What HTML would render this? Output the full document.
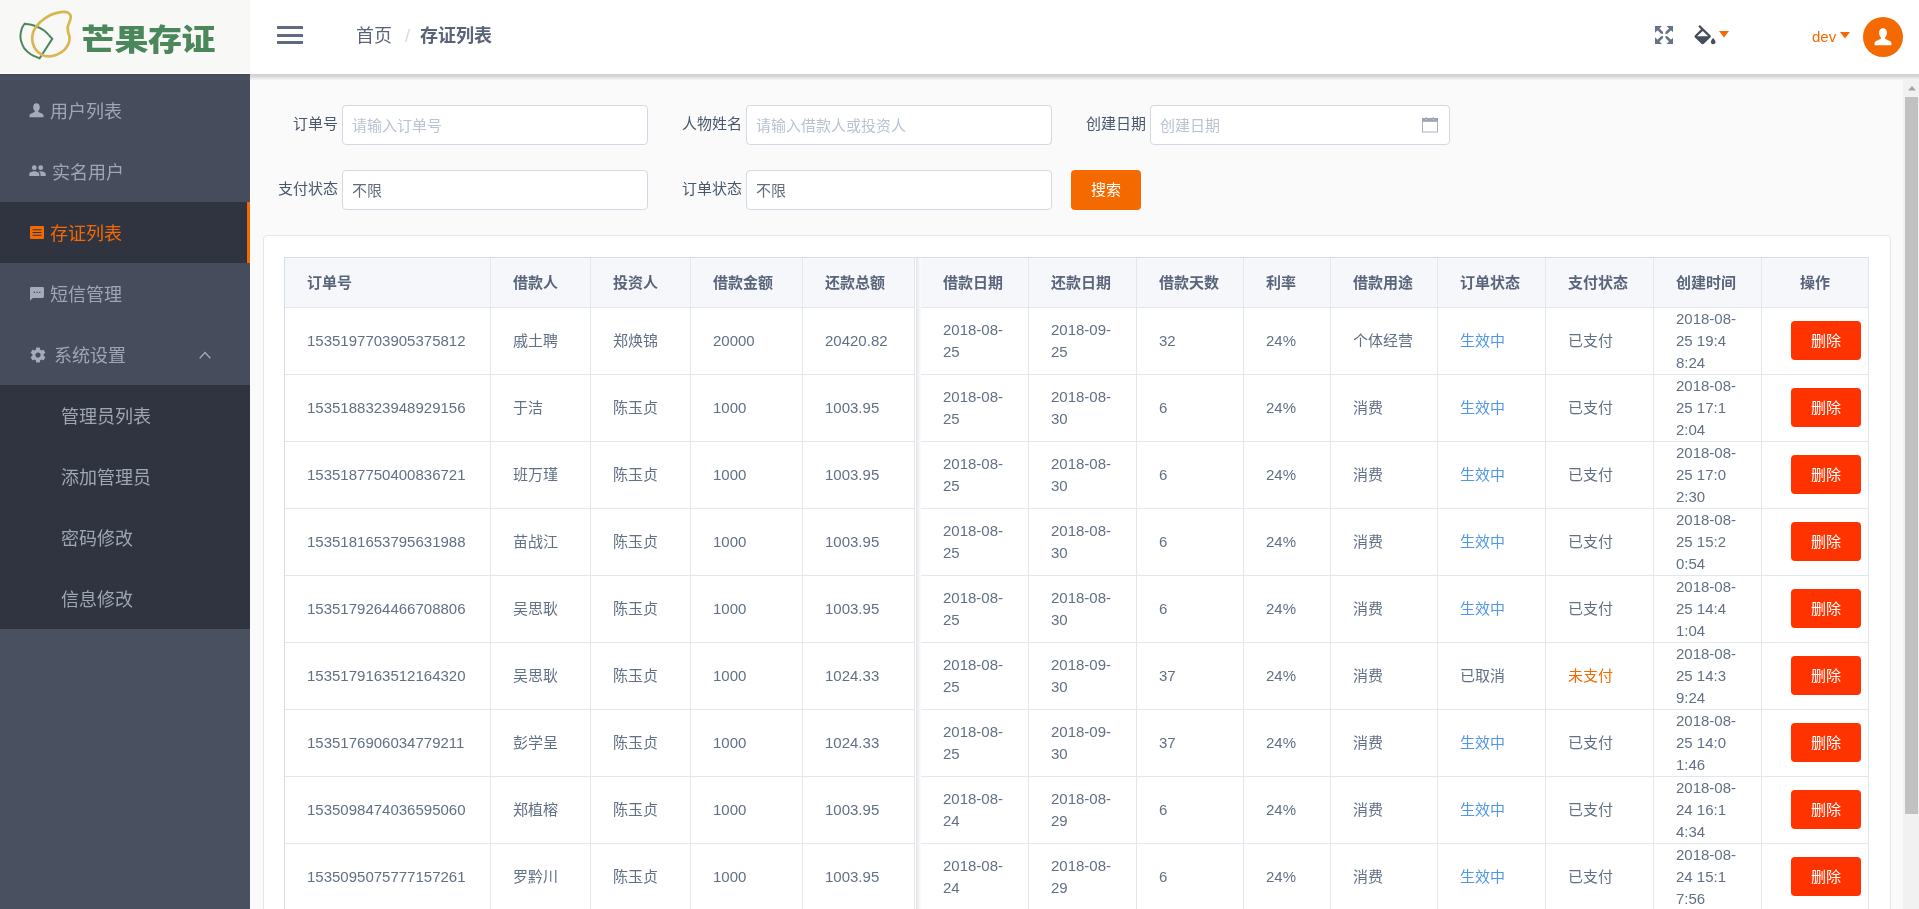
<!DOCTYPE html>
<html lang="zh-CN">
<head>
<meta charset="utf-8">
<title>芒果存证</title>
<style>
*{box-sizing:border-box;margin:0;padding:0}
html,body{width:1919px;height:909px;overflow:hidden;background:#fafafa;font-family:"Liberation Sans","Noto Sans CJK SC",sans-serif;}
body{position:relative}
#wrap{position:absolute;left:0;top:0;width:1919px;height:909px;will-change:transform}
.abs{position:absolute}
#side{position:absolute;left:0;top:0;width:250px;height:909px;background:#495060}
#menubg{position:absolute;left:0;top:80px;width:250px;height:549px;background:#464c5b}
#logo{position:absolute;left:0;top:0;width:250px;height:74px;background:#f8f8f6;border-bottom:1px solid #fff}
#logo .txt{position:absolute;left:81px;top:14px;font-size:34px;line-height:48px;font-weight:900;color:#4a875a;letter-spacing:-0.5px;white-space:nowrap;transform:scaleY(0.88);transform-origin:0 39.5px}
.mi{position:absolute;left:0;width:250px;height:61px;color:#9ea6b4;font-size:18px;line-height:61px;white-space:nowrap}
.mi .lb{position:absolute;top:2px}
.mi svg{position:absolute}
.mi.act{background:#303441;color:#f56a00;border-right:3px solid #f56a00}
#sub{position:absolute;left:0;top:385px;width:250px;height:244px;background:#303441}
#head{position:absolute;left:250px;top:0;width:1669px;height:74px;background:#fff}
#hshadow{position:absolute;left:250px;top:74px;width:1669px;height:6px;background:linear-gradient(to bottom,#d0d0d0 0,#d0d0d0 1px,#d5d5d5 1px,#d5d5d5 2px,#d8d8d8 2px,#d8d8d8 3px,#e2e2e2 3px,#e2e2e2 4px,#eaeaea 4px,#eaeaea 5px,#f1f1f1 5px,#f1f1f1 6px)}
.bc{position:absolute;top:22px;font-size:18px;line-height:28px;color:#5a6478;white-space:nowrap}
.lab{position:absolute;font-size:15px;line-height:20px;color:#48576a;white-space:nowrap;text-align:right}
.inp{position:absolute;width:306px;height:40px;border:1px solid #d1d9e4;border-radius:4px;background:#fff;font-size:15px;line-height:40px;padding-left:9px;color:#b9c3d3;white-space:nowrap}
.inp.v{color:#626c7b}
.btn{position:absolute;width:70px;height:40px;border-radius:4px;color:#fff;font-size:15px;line-height:40px;text-align:center}
#card{position:absolute;left:263px;top:235px;width:1628px;height:700px;background:#fff;border:1px solid #e1e7ef;border-radius:4px}
#tbl{position:absolute;left:284px;top:257px;width:1585px;height:660px;border-left:1px solid #d6dde7;border-top:1px solid #d6dde7;overflow:hidden}
.tr{position:absolute;left:0;width:1584px;border-bottom:1px solid #e1e7ee;background:#fff}
.tr.th{background:#f5f7fa}
.c{position:absolute;top:0;height:100%;border-right:1px solid #e1e7ee;padding:0 22px 0 22px;display:flex;align-items:center;font-size:15px;line-height:22px;color:#627085}
.c .t{width:100%;white-space:nowrap}
.th .c{font-weight:bold;color:#5a657b}
.c.op{padding:0}
.th .c.op .t{text-align:center}
.lk{color:#5298e6}
.wn{color:#f56a00}
.del{display:block;margin-top:-1px;margin-left:29px;width:70px;height:39px;border-radius:4px;background:#ff3300;color:#fff;font-size:15px;line-height:39px;text-align:center}
#gap{position:absolute;left:630px;top:0;width:6px;height:100%;background:linear-gradient(to right,#fff 0,#fff 1px,#e5e5e5 1px,#ececec 2.5px,#f7f7f7 4.5px,#fcfcfc 6px)}
#sb{position:absolute;left:1903px;top:80px;width:16px;height:829px;background:#f1f1f1}
#sb .thumb{position:absolute;left:2px;top:17px;width:13px;height:717px;background:#c1c1c1}
</style>
</head>
<body>
<div id="wrap">
<div id="side">
  <div id="logo">
    <svg class="abs" style="left:0;top:0" width="80" height="74" viewBox="0 0 80 74" fill="none">
      <path d="M24.62 23.79 C26.27 24.10 31.27 24.58 34.51 25.70 C37.76 26.81 41.11 28.29 44.07 30.47 C47.02 32.66 50.89 37.41 52.25 38.80 L39.63 58.24 C38.21 57.61 33.66 56.14 31.10 54.49 C28.54 52.84 25.96 50.62 24.28 48.35 C22.60 46.07 21.63 43.12 21.01 40.84 C20.38 38.57 20.35 36.86 20.53 34.70 C20.71 32.54 21.42 29.70 22.10 27.88 C22.78 26.06 24.20 24.47 24.62 23.79Z" stroke="#4a875a" stroke-width="2" stroke-linejoin="miter"/>
      <path d="M50.55 14.92 C52.55 14.03 54.95 13.38 57.17 12.87 C59.38 12.36 62.03 11.89 63.85 11.85 C65.67 11.80 67.02 12.08 68.08 12.60 C69.14 13.11 69.77 14.02 70.20 14.92 C70.63 15.81 70.80 16.79 70.68 17.99 C70.55 19.18 69.95 20.54 69.45 22.08 C68.95 23.62 67.87 25.43 67.67 27.20 C67.48 28.96 67.98 30.95 68.29 32.66 C68.59 34.36 69.46 35.61 69.52 37.43 C69.57 39.25 69.55 41.43 68.63 43.57 C67.71 45.71 66.09 48.35 63.99 50.26 C61.89 52.17 58.53 54.01 56.01 55.03 C53.48 56.06 51.26 56.47 48.84 56.40 C46.42 56.33 43.69 55.83 41.47 54.62 C39.26 53.42 37.02 51.21 35.54 49.17 C34.06 47.12 33.14 44.53 32.60 42.34 C32.07 40.16 32.04 38.23 32.33 36.07 C32.63 33.91 33.10 31.68 34.38 29.38 C35.65 27.08 38.18 24.15 39.97 22.28 C41.77 20.42 43.40 19.42 45.16 18.19 C46.92 16.96 48.55 15.80 50.55 14.92Z" stroke="#d9b750" stroke-width="2.700"/>
    </svg>
    <div class="txt">芒果存证</div>
  </div>
  <div class="abs" style="left:0;top:74px;width:250px;height:1px;background:#40465a"></div>
  <div id="menubg"></div>
  <div class="mi" style="top:80px">
    <svg style="left:29px;top:23px" width="15" height="15" viewBox="0 0 15 15"><path fill="#a3abb8" d="M7.5 0.3c2 0 3.3 1.5 3.3 3.7 0 1.6-.6 2.9-1.4 3.7-.4.4-.4 1.1.2 1.4l3.6 1.7c.9.4 1.3 1 1.3 1.9v1.6H.5v-1.6c0-.9.4-1.5 1.3-1.9l3.6-1.7c.6-.3.6-1 .2-1.4C4.800 6.900 4.200 5.600 4.200 4c0-2.200 1.300-3.700 3.300-3.700z"/></svg>
    <span class="lb" style="left:50px">用户列表</span>
  </div>
  <div class="mi" style="top:141px">
    <svg style="left:29px;top:24px" width="17" height="12" viewBox="0 0 17 12"><path fill="#a3abb8" d="M5.300 0.300a2.400 2.400 0 1 1 0 4.800 2.400 2.400 0 0 1 0-4.800zm6.400 0a2.400 2.400 0 1 1 0 4.800 2.400 2.400 0 0 1 0-4.800zM5.300 6.300c1.900 0 5 .9 5 2.800V11H.3V9.100c0-1.900 3.100-2.800 5-2.800zm6.400 0c2 0 5 .9 5 2.800V11h-5.200V9.100c0-1.100-.6-2-1.500-2.600.6-.1 1.200-.2 1.700-.2z"/></svg>
    <span class="lb" style="left:52px">实名用户</span>
  </div>
  <div class="mi act" style="top:202px">
    <svg style="left:30px;top:24px" width="14" height="13" viewBox="0 0 14 13"><path fill="#f56a00" d="M1 0h12a1 1 0 0 1 1 1v11a1 1 0 0 1-1 1H1a1 1 0 0 1-1-1V1a1 1 0 0 1 1-1zm1.500 3.200v1h9v-1zm0 2.800v1h9V6zm0 2.800v1h9v-1z"/></svg>
    <span class="lb" style="left:50px">存证列表</span>
  </div>
  <div class="mi" style="top:263px">
    <svg style="left:30px;top:24px" width="14" height="14" viewBox="0 0 14 14"><path fill="#a3abb8" d="M1.400 0h11.200c.8 0 1.400.6 1.400 1.400v8.100c0 .8-.6 1.400-1.400 1.400H2.800L0 13.700V1.400C0 .6.600 0 1.400 0zm2.300 4.800v1.300H5V4.800zm2.700 0v1.300h1.300V4.800zm2.700 0v1.300h1.300V4.800z"/></svg>
    <span class="lb" style="left:50px">短信管理</span>
  </div>
  <div class="mi" style="top:324px">
    <svg style="left:28.500px;top:22px" width="18" height="18" viewBox="0 0 24 24"><path fill="#a3abb8" d="M19.430 12.980c.040-.320.070-.640.070-.980s-.030-.660-.070-.980l2.110-1.650c.190-.150.240-.420.120-.640l-2-3.460c-.120-.220-.390-.300-.610-.220l-2.490 1c-.520-.400-1.080-.730-1.690-.980l-.380-2.650A.488.488 0 0 0 14 2h-4c-.250 0-.460.180-.490.420l-.380 2.650c-.610.250-1.170.590-1.690.980l-2.490-1c-.230-.090-.490 0-.610.220l-2 3.460c-.130.220-.070.490.120.640l2.110 1.650c-.040.320-.070.650-.070.980s.030.660.070.980l-2.110 1.650c-.190.150-.240.420-.120.640l2 3.460c.120.220.390.300.610.220l2.490-1c.520.400 1.080.730 1.690.980l.380 2.650c.030.240.240.420.490.420h4c.250 0 .460-.180.490-.420l.380-2.650c.610-.250 1.170-.590 1.690-.980l2.490 1c.230.090.490 0 .610-.220l2-3.460c.120-.220.070-.490-.120-.640l-2.110-1.650zM12 15.500c-1.930 0-3.500-1.570-3.500-3.500s1.570-3.500 3.500-3.500 3.500 1.570 3.500 3.500-1.570 3.500-3.500 3.500z"/></svg>
    <span class="lb" style="left:54px">系统设置</span>
    <svg style="left:199px;top:27px" width="12" height="8" viewBox="0 0 12 8"><path d="M0.700 7.200 6 1.500l5.300 5.700" stroke="#a3abb8" stroke-width="1.300" fill="none"/></svg>
  </div>
  <div id="sub">
    <div class="mi" style="top:0"><span class="lb" style="left:61px">管理员列表</span></div>
    <div class="mi" style="top:61px"><span class="lb" style="left:61px">添加管理员</span></div>
    <div class="mi" style="top:122px"><span class="lb" style="left:61px">密码修改</span></div>
    <div class="mi" style="top:183px"><span class="lb" style="left:61px">信息修改</span></div>
  </div>
</div>

<div id="head">
  <div class="abs" style="left:27px;top:26px;width:26px;height:3px;background:#5f6b80"></div>
  <div class="abs" style="left:27px;top:33.500px;width:26px;height:3px;background:#5f6b80"></div>
  <div class="abs" style="left:27px;top:41px;width:26px;height:3px;background:#5f6b80"></div>
  <div class="bc" style="left:106px">首页</div>
  <div class="bc" style="left:155px;color:#d3dce6">/</div>
  <div class="bc" style="left:170px;font-weight:bold">存证列表</div>

  <!-- fullscreen icon -->
  <svg class="abs" style="left:1404.600px;top:26px" width="18.500" height="18" viewBox="0 0 19 19" preserveAspectRatio="none"><g fill="#667387" stroke="#667387"><path stroke="none" d="M0 0h7.200L0 7.200z"/><path stroke="none" d="M19 0v7.200L11.800 0z"/><path stroke="none" d="M0 19v-7.200L7.200 19z"/><path stroke="none" d="M19 19h-7.200L19 11.800z"/><path fill="none" stroke-width="2.900" d="M2.500 2.500L16.500 16.500M16.500 2.500L2.500 16.500"/><rect stroke="none" fill="#fff" x="8.300" y="0" width="2.400" height="19"/><rect stroke="none" fill="#fff" x="0" y="8.300" width="19" height="2.400"/></g></svg>
  <!-- paint bucket -->
  <svg class="abs" style="left:1441.200px;top:25.100px" width="28" height="27.200" viewBox="0 0 24 24" preserveAspectRatio="none"><path fill="#464c5b" d="M16.560 8.940 7.620 0 6.210 1.410l2.380 2.380-5.150 5.150a1.490 1.490 0 0 0 0 2.120l5.500 5.500c.290.290.680.440 1.060.440s.770-.150 1.060-.440l5.500-5.500c.590-.580.590-1.530 0-2.120zM5.210 10 10 5.210 14.790 10H5.210zM19 11.500s-2 2.170-2 3.500c0 1.100.9 2 2 2s2-.900 2-2c0-1.330-2-3.500-2-3.500z"/></svg>
  <svg class="abs" style="left:1469px;top:31px" width="10" height="7" viewBox="0 0 10 7"><path fill="#f56a00" d="M0 0h10L5 6.500z"/></svg>
  <div class="abs" style="left:1562px;top:25px;font-size:15px;line-height:24px;color:#f56a00">dev</div>
  <svg class="abs" style="left:1590px;top:32px" width="10" height="7" viewBox="0 0 10 7"><path fill="#f56a00" d="M0 0h10L5 6.500z"/></svg>
  <div class="abs" style="left:1613px;top:17px;width:40px;height:40px;border-radius:50%;background:#f56a00"></div>
  <svg class="abs" style="left:1624px;top:28px" width="18" height="18" viewBox="0 0 15 15"><path fill="#fff" d="M7.500 0.300c2 0 3.300 1.500 3.300 3.700 0 1.600-.6 2.900-1.400 3.700-.4.400-.4 1.100.2 1.400l3.600 1.700c.9.400 1.300 1 1.300 1.900v1.600H.5v-1.600c0-.9.4-1.500 1.300-1.900l3.600-1.700c.6-.3.6-1 .2-1.400C4.800 6.900 4.200 5.600 4.200 4c0-2.200 1.300-3.700 3.300-3.700z"/></svg>
</div>
<div id="hshadow"></div>

<!-- search form -->
<div class="lab" style="left:250px;width:88px;top:114px">订单号</div>
<div class="inp" style="left:342px;top:105px">请输入订单号</div>
<div class="lab" style="left:650px;width:92px;top:114px">人物姓名</div>
<div class="inp" style="left:746px;top:105px">请输入借款人或投资人</div>
<div class="lab" style="left:1050px;width:96px;top:114px">创建日期</div>
<div class="inp" style="left:1150px;top:105px;width:300px">创建日期
  <svg class="abs" style="left:271px;top:11px" width="16" height="16" viewBox="0 0 16 16"><rect x="0.500" y="1.500" width="15" height="13.500" fill="none" stroke="#aab2c0" stroke-width="1"/><rect x="0" y="1" width="16" height="3.800" fill="#9ca5b5"/><rect x="3.700" y="0" width="1" height="2" fill="#9ca5b5"/><rect x="10.800" y="0" width="1" height="2" fill="#9ca5b5"/><circle cx="4.200" cy="2.600" r="0.600" fill="#d5dae2"/><circle cx="11.300" cy="2.600" r="0.600" fill="#d5dae2"/></svg>
</div>
<div class="lab" style="left:250px;width:88px;top:179px">支付状态</div>
<div class="inp v" style="left:342px;top:170px">不限</div>
<div class="lab" style="left:650px;width:92px;top:179px">订单状态</div>
<div class="inp v" style="left:746px;top:170px">不限</div>
<div class="btn" style="left:1071px;top:170px;background:#f56a00">搜索</div>

<div id="card"></div>
<div id="tbl">
<div class="tr th" style="top:0px;height:50px"><div class="c" style="left:0px;width:206px"><div class="t">订单号</div></div><div class="c" style="left:206px;width:100px"><div class="t">借款人</div></div><div class="c" style="left:306px;width:100px"><div class="t">投资人</div></div><div class="c" style="left:406px;width:112px"><div class="t">借款金额</div></div><div class="c lastfix" style="left:518px;width:112px"><div class="t">还款总额</div></div><div class="c" style="left:636px;width:108px"><div class="t">借款日期</div></div><div class="c" style="left:744px;width:108px"><div class="t">还款日期</div></div><div class="c" style="left:852px;width:107px"><div class="t">借款天数</div></div><div class="c" style="left:959px;width:87px"><div class="t">利率</div></div><div class="c" style="left:1046px;width:107px"><div class="t">借款用途</div></div><div class="c" style="left:1153px;width:108px"><div class="t">订单状态</div></div><div class="c" style="left:1261px;width:108px"><div class="t">支付状态</div></div><div class="c" style="left:1369px;width:108px"><div class="t">创建时间</div></div><div class="c op" style="left:1477px;width:107px"><div class="t">操作</div></div></div>
<div class="tr" style="top:50px;height:67px"><div class="c" style="left:0px;width:206px"><div class="t">1535197703905375812</div></div><div class="c" style="left:206px;width:100px"><div class="t">戚土聘</div></div><div class="c" style="left:306px;width:100px"><div class="t">郑焕锦</div></div><div class="c" style="left:406px;width:112px"><div class="t">20000</div></div><div class="c lastfix" style="left:518px;width:112px"><div class="t">20420.82</div></div><div class="c" style="left:636px;width:108px"><div class="t">2018-08-<br>25</div></div><div class="c" style="left:744px;width:108px"><div class="t">2018-09-<br>25</div></div><div class="c" style="left:852px;width:107px"><div class="t">32</div></div><div class="c" style="left:959px;width:87px"><div class="t">24%</div></div><div class="c" style="left:1046px;width:107px"><div class="t">个体经营</div></div><div class="c" style="left:1153px;width:108px"><div class="t"><span class="lk">生效中</span></div></div><div class="c" style="left:1261px;width:108px"><div class="t">已支付</div></div><div class="c" style="left:1369px;width:108px"><div class="t">2018-08-<br>25 19:4<br>8:24</div></div><div class="c op" style="left:1477px;width:107px"><div class="t"><span class="del">删除</span></div></div></div>
<div class="tr" style="top:117px;height:67px"><div class="c" style="left:0px;width:206px"><div class="t">1535188323948929156</div></div><div class="c" style="left:206px;width:100px"><div class="t">于洁</div></div><div class="c" style="left:306px;width:100px"><div class="t">陈玉贞</div></div><div class="c" style="left:406px;width:112px"><div class="t">1000</div></div><div class="c lastfix" style="left:518px;width:112px"><div class="t">1003.95</div></div><div class="c" style="left:636px;width:108px"><div class="t">2018-08-<br>25</div></div><div class="c" style="left:744px;width:108px"><div class="t">2018-08-<br>30</div></div><div class="c" style="left:852px;width:107px"><div class="t">6</div></div><div class="c" style="left:959px;width:87px"><div class="t">24%</div></div><div class="c" style="left:1046px;width:107px"><div class="t">消费</div></div><div class="c" style="left:1153px;width:108px"><div class="t"><span class="lk">生效中</span></div></div><div class="c" style="left:1261px;width:108px"><div class="t">已支付</div></div><div class="c" style="left:1369px;width:108px"><div class="t">2018-08-<br>25 17:1<br>2:04</div></div><div class="c op" style="left:1477px;width:107px"><div class="t"><span class="del">删除</span></div></div></div>
<div class="tr" style="top:184px;height:67px"><div class="c" style="left:0px;width:206px"><div class="t">1535187750400836721</div></div><div class="c" style="left:206px;width:100px"><div class="t">班万瑾</div></div><div class="c" style="left:306px;width:100px"><div class="t">陈玉贞</div></div><div class="c" style="left:406px;width:112px"><div class="t">1000</div></div><div class="c lastfix" style="left:518px;width:112px"><div class="t">1003.95</div></div><div class="c" style="left:636px;width:108px"><div class="t">2018-08-<br>25</div></div><div class="c" style="left:744px;width:108px"><div class="t">2018-08-<br>30</div></div><div class="c" style="left:852px;width:107px"><div class="t">6</div></div><div class="c" style="left:959px;width:87px"><div class="t">24%</div></div><div class="c" style="left:1046px;width:107px"><div class="t">消费</div></div><div class="c" style="left:1153px;width:108px"><div class="t"><span class="lk">生效中</span></div></div><div class="c" style="left:1261px;width:108px"><div class="t">已支付</div></div><div class="c" style="left:1369px;width:108px"><div class="t">2018-08-<br>25 17:0<br>2:30</div></div><div class="c op" style="left:1477px;width:107px"><div class="t"><span class="del">删除</span></div></div></div>
<div class="tr" style="top:251px;height:67px"><div class="c" style="left:0px;width:206px"><div class="t">1535181653795631988</div></div><div class="c" style="left:206px;width:100px"><div class="t">苗战江</div></div><div class="c" style="left:306px;width:100px"><div class="t">陈玉贞</div></div><div class="c" style="left:406px;width:112px"><div class="t">1000</div></div><div class="c lastfix" style="left:518px;width:112px"><div class="t">1003.95</div></div><div class="c" style="left:636px;width:108px"><div class="t">2018-08-<br>25</div></div><div class="c" style="left:744px;width:108px"><div class="t">2018-08-<br>30</div></div><div class="c" style="left:852px;width:107px"><div class="t">6</div></div><div class="c" style="left:959px;width:87px"><div class="t">24%</div></div><div class="c" style="left:1046px;width:107px"><div class="t">消费</div></div><div class="c" style="left:1153px;width:108px"><div class="t"><span class="lk">生效中</span></div></div><div class="c" style="left:1261px;width:108px"><div class="t">已支付</div></div><div class="c" style="left:1369px;width:108px"><div class="t">2018-08-<br>25 15:2<br>0:54</div></div><div class="c op" style="left:1477px;width:107px"><div class="t"><span class="del">删除</span></div></div></div>
<div class="tr" style="top:318px;height:67px"><div class="c" style="left:0px;width:206px"><div class="t">1535179264466708806</div></div><div class="c" style="left:206px;width:100px"><div class="t">吴思耿</div></div><div class="c" style="left:306px;width:100px"><div class="t">陈玉贞</div></div><div class="c" style="left:406px;width:112px"><div class="t">1000</div></div><div class="c lastfix" style="left:518px;width:112px"><div class="t">1003.95</div></div><div class="c" style="left:636px;width:108px"><div class="t">2018-08-<br>25</div></div><div class="c" style="left:744px;width:108px"><div class="t">2018-08-<br>30</div></div><div class="c" style="left:852px;width:107px"><div class="t">6</div></div><div class="c" style="left:959px;width:87px"><div class="t">24%</div></div><div class="c" style="left:1046px;width:107px"><div class="t">消费</div></div><div class="c" style="left:1153px;width:108px"><div class="t"><span class="lk">生效中</span></div></div><div class="c" style="left:1261px;width:108px"><div class="t">已支付</div></div><div class="c" style="left:1369px;width:108px"><div class="t">2018-08-<br>25 14:4<br>1:04</div></div><div class="c op" style="left:1477px;width:107px"><div class="t"><span class="del">删除</span></div></div></div>
<div class="tr" style="top:385px;height:67px"><div class="c" style="left:0px;width:206px"><div class="t">1535179163512164320</div></div><div class="c" style="left:206px;width:100px"><div class="t">吴思耿</div></div><div class="c" style="left:306px;width:100px"><div class="t">陈玉贞</div></div><div class="c" style="left:406px;width:112px"><div class="t">1000</div></div><div class="c lastfix" style="left:518px;width:112px"><div class="t">1024.33</div></div><div class="c" style="left:636px;width:108px"><div class="t">2018-08-<br>25</div></div><div class="c" style="left:744px;width:108px"><div class="t">2018-09-<br>30</div></div><div class="c" style="left:852px;width:107px"><div class="t">37</div></div><div class="c" style="left:959px;width:87px"><div class="t">24%</div></div><div class="c" style="left:1046px;width:107px"><div class="t">消费</div></div><div class="c" style="left:1153px;width:108px"><div class="t">已取消</div></div><div class="c" style="left:1261px;width:108px"><div class="t"><span class="wn">未支付</span></div></div><div class="c" style="left:1369px;width:108px"><div class="t">2018-08-<br>25 14:3<br>9:24</div></div><div class="c op" style="left:1477px;width:107px"><div class="t"><span class="del">删除</span></div></div></div>
<div class="tr" style="top:452px;height:67px"><div class="c" style="left:0px;width:206px"><div class="t">1535176906034779211</div></div><div class="c" style="left:206px;width:100px"><div class="t">彭学呈</div></div><div class="c" style="left:306px;width:100px"><div class="t">陈玉贞</div></div><div class="c" style="left:406px;width:112px"><div class="t">1000</div></div><div class="c lastfix" style="left:518px;width:112px"><div class="t">1024.33</div></div><div class="c" style="left:636px;width:108px"><div class="t">2018-08-<br>25</div></div><div class="c" style="left:744px;width:108px"><div class="t">2018-09-<br>30</div></div><div class="c" style="left:852px;width:107px"><div class="t">37</div></div><div class="c" style="left:959px;width:87px"><div class="t">24%</div></div><div class="c" style="left:1046px;width:107px"><div class="t">消费</div></div><div class="c" style="left:1153px;width:108px"><div class="t"><span class="lk">生效中</span></div></div><div class="c" style="left:1261px;width:108px"><div class="t">已支付</div></div><div class="c" style="left:1369px;width:108px"><div class="t">2018-08-<br>25 14:0<br>1:46</div></div><div class="c op" style="left:1477px;width:107px"><div class="t"><span class="del">删除</span></div></div></div>
<div class="tr" style="top:519px;height:67px"><div class="c" style="left:0px;width:206px"><div class="t">1535098474036595060</div></div><div class="c" style="left:206px;width:100px"><div class="t">郑植榕</div></div><div class="c" style="left:306px;width:100px"><div class="t">陈玉贞</div></div><div class="c" style="left:406px;width:112px"><div class="t">1000</div></div><div class="c lastfix" style="left:518px;width:112px"><div class="t">1003.95</div></div><div class="c" style="left:636px;width:108px"><div class="t">2018-08-<br>24</div></div><div class="c" style="left:744px;width:108px"><div class="t">2018-08-<br>29</div></div><div class="c" style="left:852px;width:107px"><div class="t">6</div></div><div class="c" style="left:959px;width:87px"><div class="t">24%</div></div><div class="c" style="left:1046px;width:107px"><div class="t">消费</div></div><div class="c" style="left:1153px;width:108px"><div class="t"><span class="lk">生效中</span></div></div><div class="c" style="left:1261px;width:108px"><div class="t">已支付</div></div><div class="c" style="left:1369px;width:108px"><div class="t">2018-08-<br>24 16:1<br>4:34</div></div><div class="c op" style="left:1477px;width:107px"><div class="t"><span class="del">删除</span></div></div></div>
<div class="tr" style="top:586px;height:67px"><div class="c" style="left:0px;width:206px"><div class="t">1535095075777157261</div></div><div class="c" style="left:206px;width:100px"><div class="t">罗黔川</div></div><div class="c" style="left:306px;width:100px"><div class="t">陈玉贞</div></div><div class="c" style="left:406px;width:112px"><div class="t">1000</div></div><div class="c lastfix" style="left:518px;width:112px"><div class="t">1003.95</div></div><div class="c" style="left:636px;width:108px"><div class="t">2018-08-<br>24</div></div><div class="c" style="left:744px;width:108px"><div class="t">2018-08-<br>29</div></div><div class="c" style="left:852px;width:107px"><div class="t">6</div></div><div class="c" style="left:959px;width:87px"><div class="t">24%</div></div><div class="c" style="left:1046px;width:107px"><div class="t">消费</div></div><div class="c" style="left:1153px;width:108px"><div class="t"><span class="lk">生效中</span></div></div><div class="c" style="left:1261px;width:108px"><div class="t">已支付</div></div><div class="c" style="left:1369px;width:108px"><div class="t">2018-08-<br>24 15:1<br>7:56</div></div><div class="c op" style="left:1477px;width:107px"><div class="t"><span class="del">删除</span></div></div></div>
<div class="tr" style="top:653px;height:67px"><div class="c" style="left:0px;width:206px"><div class="t">1535094311246338471</div></div><div class="c" style="left:206px;width:100px"><div class="t">罗黔川</div></div><div class="c" style="left:306px;width:100px"><div class="t">陈玉贞</div></div><div class="c" style="left:406px;width:112px"><div class="t">1000</div></div><div class="c lastfix" style="left:518px;width:112px"><div class="t">1003.95</div></div><div class="c" style="left:636px;width:108px"><div class="t">2018-08-<br>24</div></div><div class="c" style="left:744px;width:108px"><div class="t">2018-08-<br>29</div></div><div class="c" style="left:852px;width:107px"><div class="t">6</div></div><div class="c" style="left:959px;width:87px"><div class="t">24%</div></div><div class="c" style="left:1046px;width:107px"><div class="t">消费</div></div><div class="c" style="left:1153px;width:108px"><div class="t"><span class="lk">生效中</span></div></div><div class="c" style="left:1261px;width:108px"><div class="t">已支付</div></div><div class="c" style="left:1369px;width:108px"><div class="t">2018-08-<br>24 15:0<br>5:11</div></div><div class="c op" style="left:1477px;width:107px"><div class="t"><span class="del">删除</span></div></div></div>
<div id="gap"></div>
</div>

<div id="sb"><div class="thumb"></div>
  <svg class="abs" style="left:5px;top:6px" width="8" height="5" viewBox="0 0 8 5"><path fill="#a3a3a3" d="M0 4.500h8L4 0z"/></svg>
</div>
</div>
</body>
</html>
